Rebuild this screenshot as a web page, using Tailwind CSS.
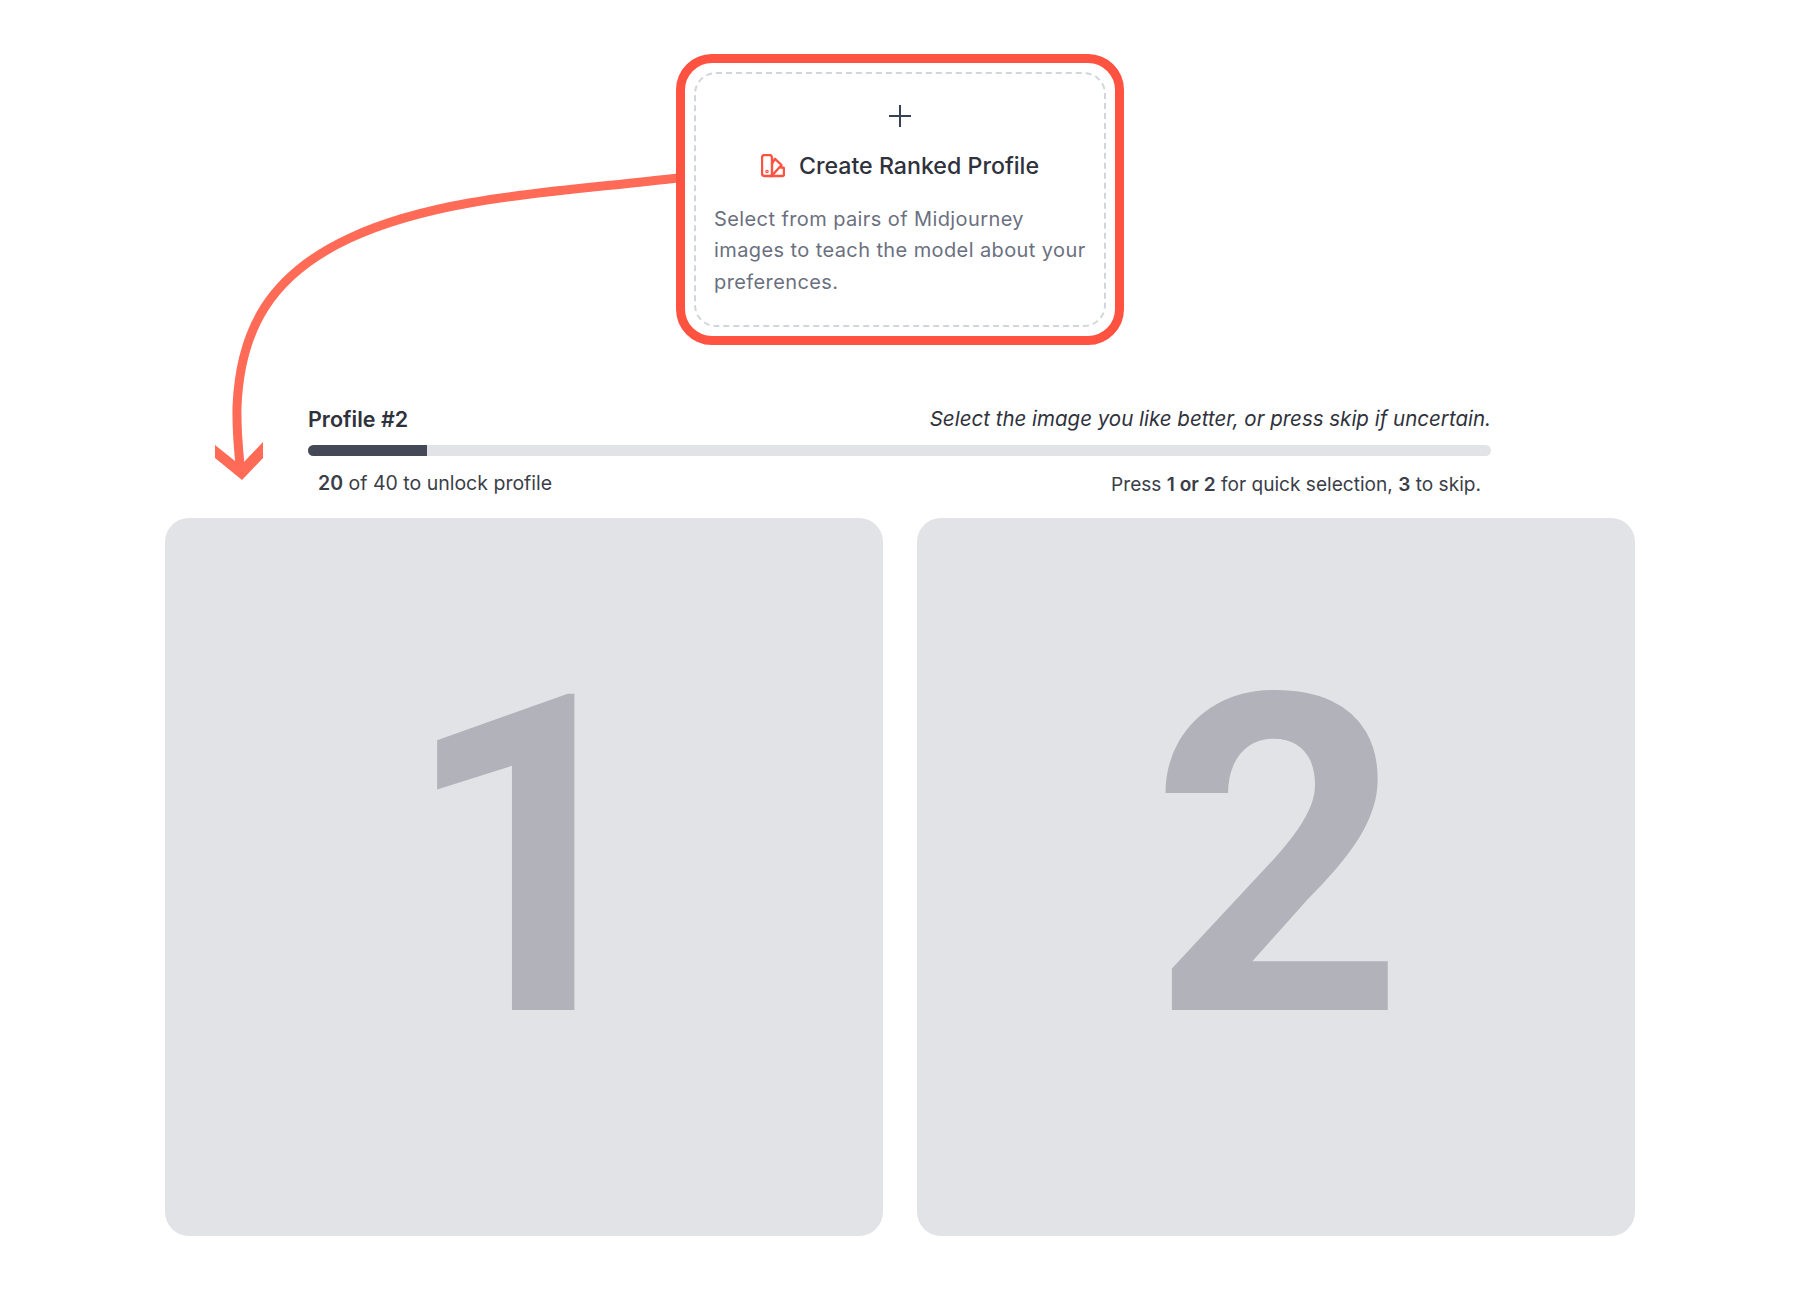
<!DOCTYPE html>
<html lang="en">
  <head>
    <meta charset="UTF-8" />
    <script src="https://cdn.jsdelivr.net/npm/@tailwindcss/browser@4"></script>
    <title>Ranked profile</title>
  </head>
  <body class="bg-white font-['Inter',sans-serif]">
    <div class="relative w-[1800px] h-[1290px] overflow-hidden">
      <!-- arrow from the card down to the first image -->
      <svg class="absolute left-0 top-0" width="1800" height="1290" fill="none">
        <path d="M678 178C560 192 440 196 350 238C270 275 240 330 237 407C236.5 430 238 445 240 465" stroke="#ff6b57" stroke-width="9" />
        <path d="M215 445V458L242 480L263 458V442L244 462L235 461Z" fill="#ff6b57" />
      </svg>

      <div class="flex justify-center pt-[54px]">
        <div class="relative w-[448px] h-[291px] rounded-[36px] border-[9px] border-[#ff5240] p-[9px]">
          <div class="h-full rounded-[22px] border-2 border-dashed border-gray-300 px-[18px] pt-[29px]">
            <div class="flex justify-center">
              <svg width="26" height="26" viewBox="0 0 26 26" fill="none" stroke="#374151" stroke-width="2">
                <path d="M13 2V24M2 13H24" />
              </svg>
            </div>
            <div class="flex items-center justify-center gap-[14px] mt-[20px]">
              <svg width="24" height="24" viewBox="0 0 24 24" fill="none" stroke="#ff5240" stroke-width="2.4" stroke-linecap="round" stroke-linejoin="round">
                <path d="M1 3.5a2.5 2.5 0 0 1 2.5-2.5h5a2.5 2.5 0 0 1 2.5 2.5V22H3.5A2.5 2.5 0 0 1 1 19.5Z" />
                <path d="M11 9.5L14 4.8L20.5 11L12 20.5" />
                <path d="M20 13.5h1.5a1.5 1.5 0 0 1 1.5 1.5v5.5a1.5 1.5 0 0 1-1.5 1.5H9" />
                <circle cx="6" cy="17.5" r="0.6" />
              </svg>
              <span class="text-[23.2px] font-[450] text-[#2f323c]">Create Ranked Profile</span>
            </div>
            <p class="mt-[20px] text-[20px] tracking-[0.4px] leading-[31.5px] text-[#6b7080]">Select from pairs of Midjourney images to teach the model about your preferences.</p>
          </div>
        </div>
      </div>

      <div class="ml-[308px] w-[1183px] mt-[58px]">
        <div class="flex justify-between items-center h-[32px] text-[#2f323c]">
          <span class="font-semibold text-[21.5px]">Profile #2</span>
          <span class="italic text-[20.5px]">Select the image you like better, or press skip if uncertain.</span>
        </div>
        <div class="mt-[10px] h-[11px] rounded-full bg-[#e2e3e7] overflow-hidden">
          <div class="h-full w-[119px] bg-[#454856]"></div>
        </div>
        <div class="flex justify-between items-center px-[10px] mt-[14px] h-[28px] text-[#3b3e48]">
          <span class="text-[19.5px]"><b class="font-semibold">20</b> of 40 to unlock profile</span>
          <span class="text-[19.1px]">Press <b class="font-semibold">1 or 2</b> for quick selection, <b class="font-semibold">3</b> to skip.</span>
        </div>
      </div>

      <div class="flex justify-center gap-[34px] mt-[19.5px]">
        <div class="w-[718px] h-[718px] rounded-[24px] bg-[#e2e3e7] flex items-center justify-center pb-[37px] pl-[8px] font-['Roboto',sans-serif] text-[444px] leading-none font-bold text-[#b1b2ba]">1</div>
        <div class="w-[718px] h-[718px] rounded-[24px] bg-[#e2e3e7] flex items-center justify-center pb-[37px] pl-[3px] font-['Roboto',sans-serif] text-[444px] leading-none font-bold text-[#b1b2ba]">2</div>
      </div>
    </div>
  </body>
</html>
